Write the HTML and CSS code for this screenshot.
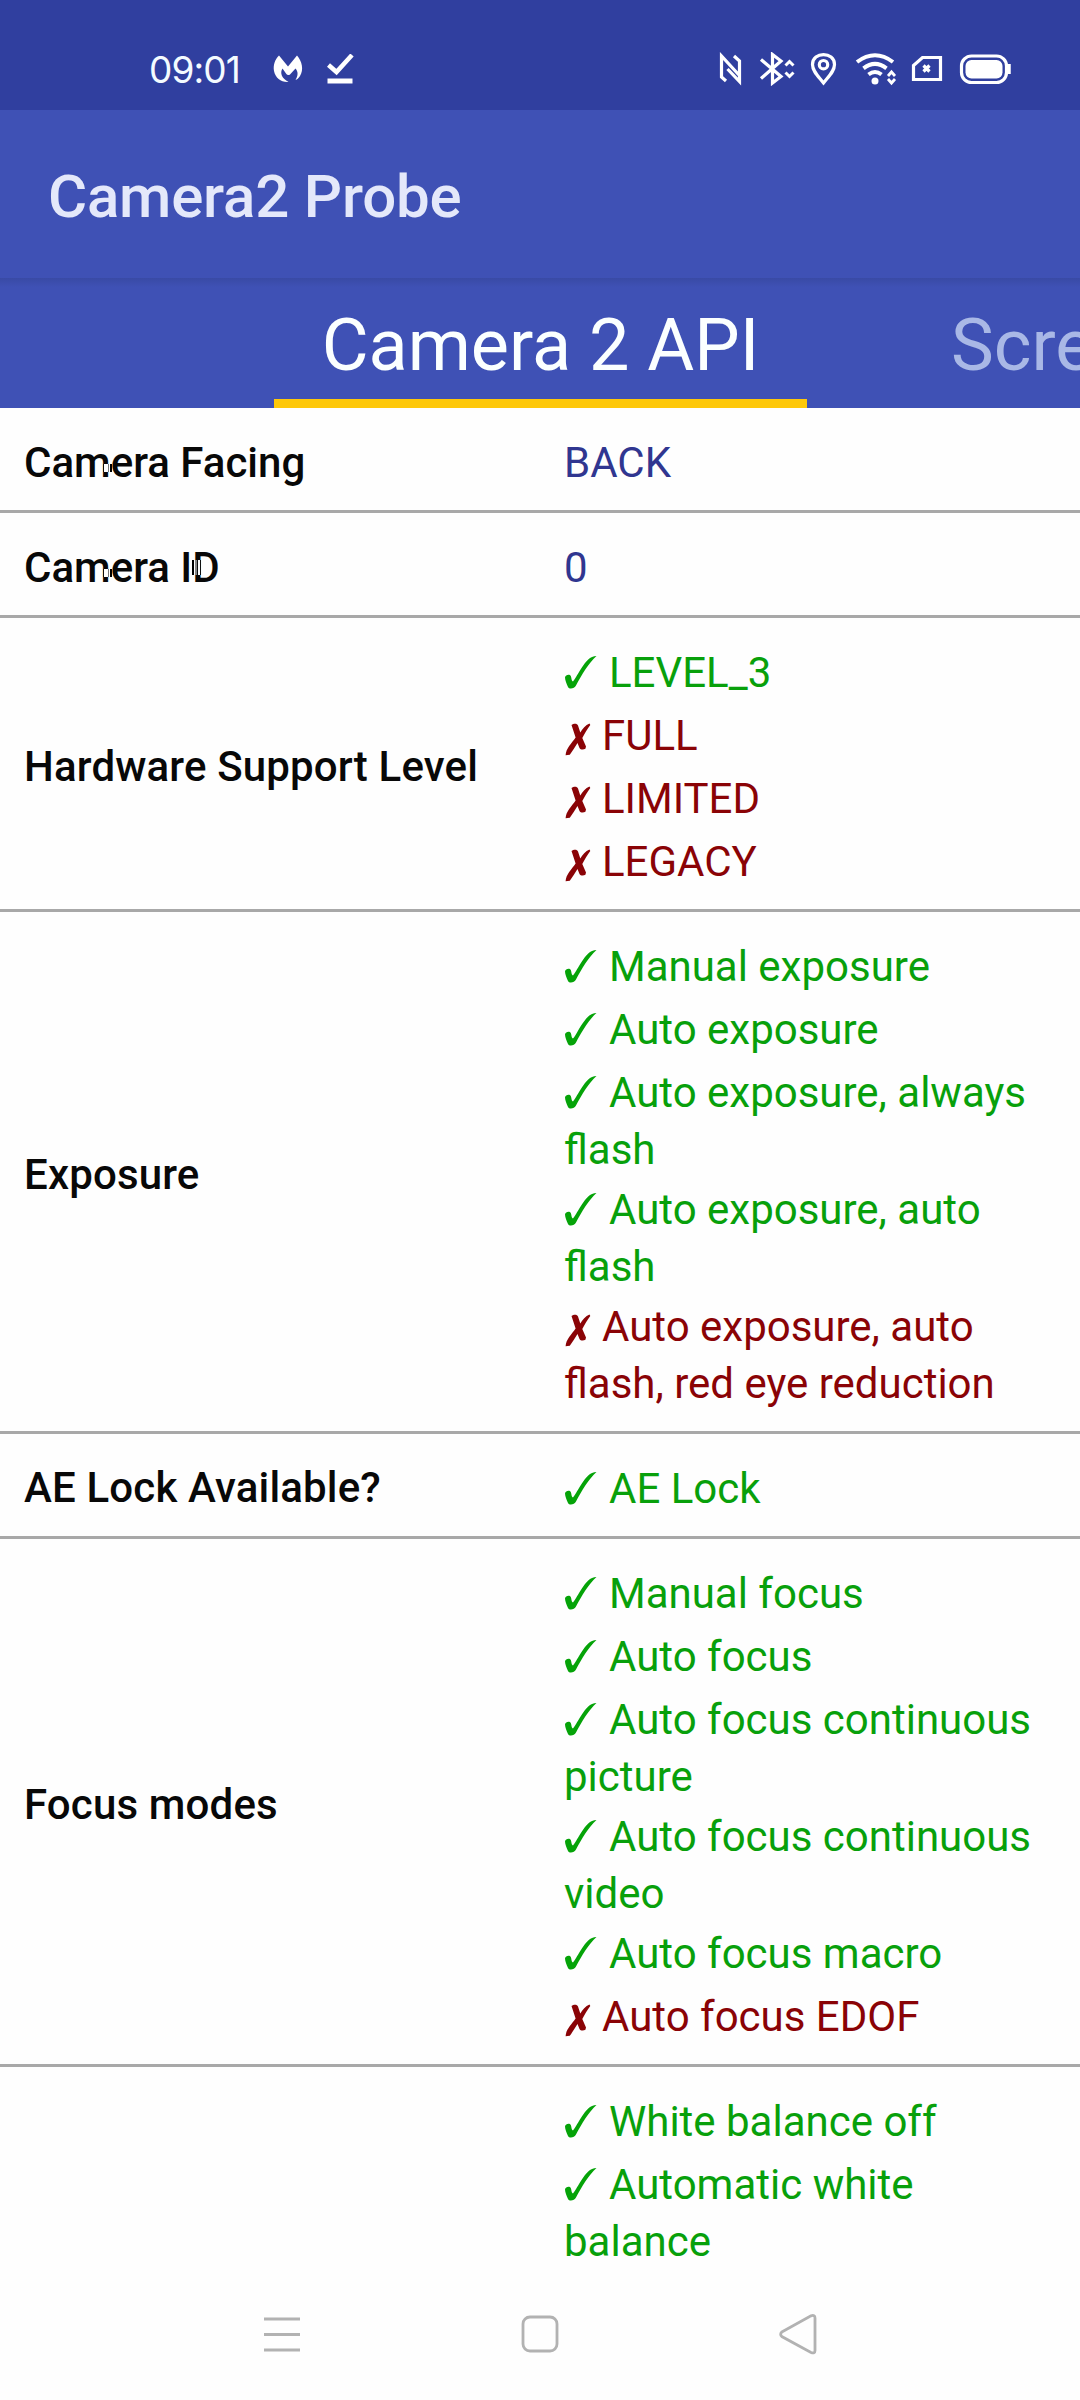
FILE: index.html
```html
<!DOCTYPE html>
<html lang="en">
<head>
<meta charset="utf-8">
<title>Camera2 Probe</title>
<link rel="stylesheet" href="styles.css">
</head>
<body>
<svg class="defs" aria-hidden="true">
  <symbol id="yes" viewBox="0 0 45 36"><path d="M1 22.500 C1.500 19.500 5.800 18.800 6.800 21 C7.600 23 7.300 25.800 9 26.500 C12 24 20 5 28 2 C29.500 1.200 31 1 32.500 1 C25 7.500 17.500 20 12 30.500 C10.500 33.500 5.500 34.800 4 32 C2.800 29 1 25.500 1 22.500Z"/></symbol>
  <symbol id="no" viewBox="0 0 38 36"><path d="M7.500 5 C9.500 3.500 13 3 14 5.500 L16.300 12.500 C18.500 9 21.500 5 25.500 3.500 L26.300 5 C23.500 9 20.500 13.500 18.300 18 L22 26.500 L21.400 28.800 C19.500 30 16.500 30 15.500 28 L13.500 23 C11 27 8.500 31 5.800 34.800 L1.600 35.200 C2 28.500 7.500 23.500 11.600 17.600 Z"/></symbol>
</svg>
<div class="screen">
  <header class="status">
    <span class="clock">09:01</span>
    <svg class="left-icons" viewBox="0 0 84 30" width="84" height="30">
      <path fill="#fff" d="M6 1.500 L15 12.500 L24 1.500 C29 7 31 16 27 22 C25.500 24.500 24 25.500 22.500 26 C25 22 25.500 18 22.500 14.500 L17 20.500 C15.500 21.500 14 21 13 19.500 L9.500 14.500 C6.500 19 9 24.500 15.500 28 C8 28.500 2.500 24 1 17 C0 11 2 5.500 6 1.500Z"/>
      <path fill="none" stroke="#fff" stroke-width="4.500" d="M55.500 11 L63.500 18 L79 1"/>
      <path fill="#fff" d="M54.500 24.500h25v5h-25z"/>
    </svg>
    <svg class="right-icons" viewBox="0 0 294 34" width="294" height="34" fill="none" stroke="#fff" stroke-width="3.200">
      <path d="M8 29 L3.500 25 V4 L21 23 M16 4 L21.500 9 V29.500 L9.500 17"/>
      <path d="M43 7.500 L63 24.500 L54.500 31 V2.500 L63 9 L43 26.500"/>
      <path stroke-width="3" d="M67.500 13.500 L71.500 9.500 L75.500 13.500 M67.500 20.500 L71.500 24.500 L75.500 20.500"/>
      <path d="M105.500 31 C100 24 94.500 19 94.500 12.500 C94.500 -0.800 116.500 -0.800 116.500 12.500 C116.500 19 111 24 105.500 31Z"/><circle cx="105.500" cy="12.700" r="4.200"/>
      <path stroke-width="4" d="M139 10 Q157 -3.500 175 10 M145.500 16.300 Q157 7.500 168.500 16.300 M150.500 22.500 Q157 17.500 163.500 22.500"/>
      <circle cx="157" cy="29" r="3.500" fill="#fff" stroke="none"/>
      <path stroke-width="2.800" d="M170 24 L173.500 20 L177 24 M170 27 L173.500 31 L177 27"/>
      <path d="M204.500 5.500 H222.500 V27.500 H195.500 V13.500Z"/><path d="M205.500 13.500 L211.500 19.500 M211.500 13.500 L205.500 19.500"/>
      <rect x="243.500" y="4" width="45" height="26.500" rx="10"/>
      <rect x="247.500" y="8" width="37" height="18.500" rx="6" fill="#fff" stroke="none"/>
      <path d="M291 12 V22" stroke-width="3.500"/>
    </svg>
  </header>
  <div class="appbar"><h1>Camera2 Probe</h1></div>
  <nav class="tabs">
    <span class="tab active">Camera 2 API</span>
    <span class="tab">Screen</span>
  </nav>
  <main class="list">
    <section class="row"><h2>Camera Facing<i class="nick"></i></h2><div class="values"><p>BACK</p></div></section>
    <section class="row"><h2>Camera ID<i class="nick"></i><i class="nick tall"></i></h2><div class="values"><p>0</p></div></section>
    <section class="row"><h2>Hardware Support Level</h2><div class="values">
      <p class="yes"><svg><use href="#yes"/></svg>LEVEL_3</p>
      <p class="no"><svg><use href="#no"/></svg>FULL</p>
      <p class="no"><svg><use href="#no"/></svg>LIMITED</p>
      <p class="no"><svg><use href="#no"/></svg>LEGACY</p>
    </div></section>
    <section class="row"><h2>Exposure</h2><div class="values">
      <p class="yes"><svg><use href="#yes"/></svg>Manual exposure</p>
      <p class="yes"><svg><use href="#yes"/></svg>Auto exposure</p>
      <p class="yes wrapped"><svg><use href="#yes"/></svg>Auto exposure, always<br>flash</p>
      <p class="yes wrapped"><svg><use href="#yes"/></svg>Auto exposure, auto<br>flash</p>
      <p class="no wrapped"><svg><use href="#no"/></svg>Auto exposure, auto<br>flash, red eye reduction</p>
    </div></section>
    <section class="row"><h2>AE Lock Available?</h2><div class="values">
      <p class="yes"><svg><use href="#yes"/></svg>AE Lock</p>
    </div></section>
    <section class="row"><h2>Focus modes</h2><div class="values">
      <p class="yes"><svg><use href="#yes"/></svg>Manual focus</p>
      <p class="yes"><svg><use href="#yes"/></svg>Auto focus</p>
      <p class="yes wrapped"><svg><use href="#yes"/></svg>Auto focus continuous<br>picture</p>
      <p class="yes wrapped"><svg><use href="#yes"/></svg>Auto focus continuous<br>video</p>
      <p class="yes"><svg><use href="#yes"/></svg>Auto focus macro</p>
      <p class="no"><svg><use href="#no"/></svg>Auto focus EDOF</p>
    </div></section>
    <section class="row"><h2></h2><div class="values">
      <p class="yes"><svg><use href="#yes"/></svg>White balance off</p>
      <p class="yes wrapped"><svg><use href="#yes"/></svg>Automatic white<br>balance</p>
    </div></section>
  </main>
  <footer class="navbar">
    <svg viewBox="0 0 38 42" width="38" height="42"><path d="M1 5h36M1 20.500h36M1 36h36"/></svg>
    <svg viewBox="0 0 38 42" width="38" height="42"><rect x="2" y="3" width="34" height="34" rx="7"/></svg>
    <svg viewBox="0 0 38 42" width="38" height="42"><path d="M2.800 18 L32 1.800 Q36 0.500 36 4 V36.500 Q36 40 32 38.500 L2.800 22.500 Q0.500 20.300 2.800 18Z"/></svg>
  </footer>
</div>
</body>
</html>
```

FILE: styles.css
```css
* { box-sizing: border-box; margin: 0; padding: 0; }
body { background: #fefefe; font-family: Roboto, sans-serif; }
.defs { display: none; }
.screen { width: 1080px; height: 2400px; display: flex; flex-direction: column; overflow: hidden; }

.status { height: 110px; flex: none; background: #303f9f; display: flex; align-items: center; padding: 28px 68px 0 149px; }
.clock { color: #f4fbff; font: 400 37px/40px Inter, sans-serif; letter-spacing: -0.9px; width: 124px; padding-top: 1px; }
.left-icons { flex: none; }
.right-icons { flex: none; margin-left: auto; }

.appbar { height: 168px; flex: none; background: #3f51b5; padding: 52px 48px 0; }
.appbar h1 { font-size: 60px; font-weight: 500; line-height: 70px; letter-spacing: -0.2px; color: #e4e8fa; white-space: nowrap; }

.tabs { height: 130px; flex: none; display: flex; padding-left: 274px; overflow: hidden; background: linear-gradient(#394aa5, #3f51b5 9px); }
.tab { flex: none; height: 130px; padding: 26px 48px 0; font-size: 72px; line-height: 84px; color: #a9b8e6; white-space: nowrap; }
.tab.active { width: 533px; text-align: center; padding: 26px 0 0; color: #fbffff; border-bottom: 9px solid #fec80a; margin-right: 96px; }

.list { flex: none; height: 1860px; overflow: hidden; }
.row { display: flex; align-items: center; padding: 20px 24px 19px; border-bottom: 3px solid #a8a8a8; font-size: 42px; line-height: 57px; }
.row:last-child { border-bottom: 0; }
.row h2 { position: relative; flex: none; width: 540px; padding-top: 5px; padding-bottom: 1px; font-size: inherit; font-weight: 500; letter-spacing: 0.16px; color: #080808; }
.row:nth-child(-n+2) h2 { padding-top: 6px; padding-bottom: 0; letter-spacing: 0; }

/* Small nicks over the label glyphs */
.nick { position: absolute; left: 79px; top: 36px; width: 9px; height: 8px; background: linear-gradient(90deg, #111 0 1px, #fff 1px 5px, #777 5px 6px, #fff 6px 7px, #000 7px); }
.nick.tall { left: 168px; top: 27px; width: 9px; height: 15px; background: linear-gradient(90deg, #000 0 2px, #fff 2px 3px, #888 3px 5px, #111 5px 6px, #fff 6px 8px, #111 8px); }

.values { flex: none; color: #303690; white-space: nowrap; }
.values p { padding-top: 6px; }
.values p.wrapped:not(:last-child) { margin-bottom: -3px; }
.values .yes { color: #08a00b; }
.values .no { color: #8a0306; }
.values svg { height: 36px; width: 45px; vertical-align: -4px; fill: #05a308; overflow: visible; }
.values .no svg { width: 38px; vertical-align: -6px; fill: #8a0306; }

.navbar { flex: 1; display: flex; gap: 220px; padding: 46px 0 0 263px; }
.navbar svg { flex: none; fill: none; stroke: #b2b2b2; stroke-width: 2.8; }
```
